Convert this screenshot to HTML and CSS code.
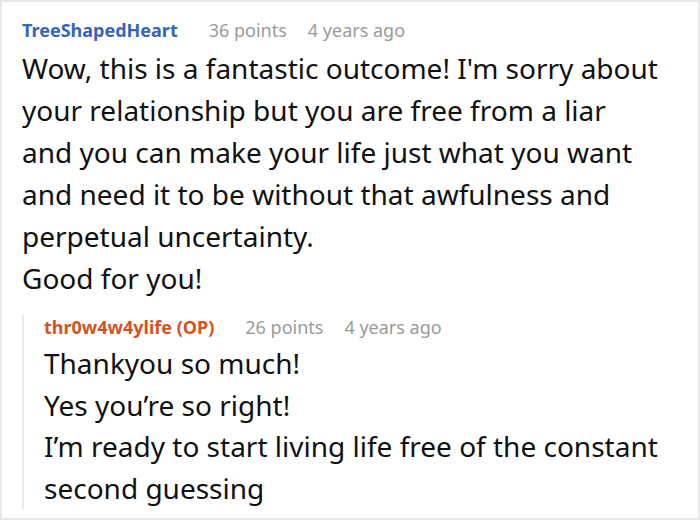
FILE: index.html
```html
<!DOCTYPE html>
<html>
<head>
    <title>Comments</title>
    <meta charset="UTF-8">
    <link rel="stylesheet" href="styles.css">
</head>
<body>
    <div class="thread">
        <div class="comment">
            <div class="meta">
                <span class="author">TreeShapedHeart</span>
                <span class="points">36 points</span>
                <span class="age">4 years ago</span>
            </div>
            <div class="text">
                <p>Wow, this is a fantastic outcome! I'm sorry about your relationship but you are free from a liar and you can make your life just what you want and need it to be without that awfulness and perpetual uncertainty.</p>
                <p>Good for you!</p>
            </div>

            <div class="reply">
                <div class="meta">
                    <span class="author op">thr0w4w4ylife (OP)</span>
                    <span class="points">26 points</span>
                    <span class="age">4 years ago</span>
                </div>
                <div class="text">
                    <p>Thankyou so much!</p>
                    <p>Yes you’re so right!</p>
                    <p>I’m ready to start living life free of the constant second guessing</p>
                </div>
            </div>
        </div>
    </div>
</body>
</html>
```

FILE: styles.css
```css
:root {
    --blue: #3565b8;
    --orange: #d5531c;
    --grey: #9a9a9a;
    --line: #e8e8e8;
}

body {
    margin: 0;
    font-family: 'Noto Sans', 'Open Sans', sans-serif;
    color: #111;
    background: #fff;
}

.thread {
    width: 700px;
    height: 520px;
    box-sizing: border-box;
    border: 2px solid var(--line);
    padding: 16px 38px 0 20px;
    overflow: hidden;
}

.meta {
    display: flex;
    gap: 21px;
    font-size: 18px;
    line-height: 24px;
    color: var(--grey);
}

.author {
    font-weight: 700;
    color: var(--blue);
    margin-right: 10px;
}

.author.op {
    color: var(--orange);
}

.text {
    margin-top: 5px;
    font-size: 28px;
    line-height: 42px;
}

.text p {
    margin: 0;
}

.reply {
    margin-top: 16px;
    border-left: 2px solid var(--line);
    padding-left: 20px;
}

.reply .text {
    margin-top: 4px;
    line-height: 41.5px;
}
```
